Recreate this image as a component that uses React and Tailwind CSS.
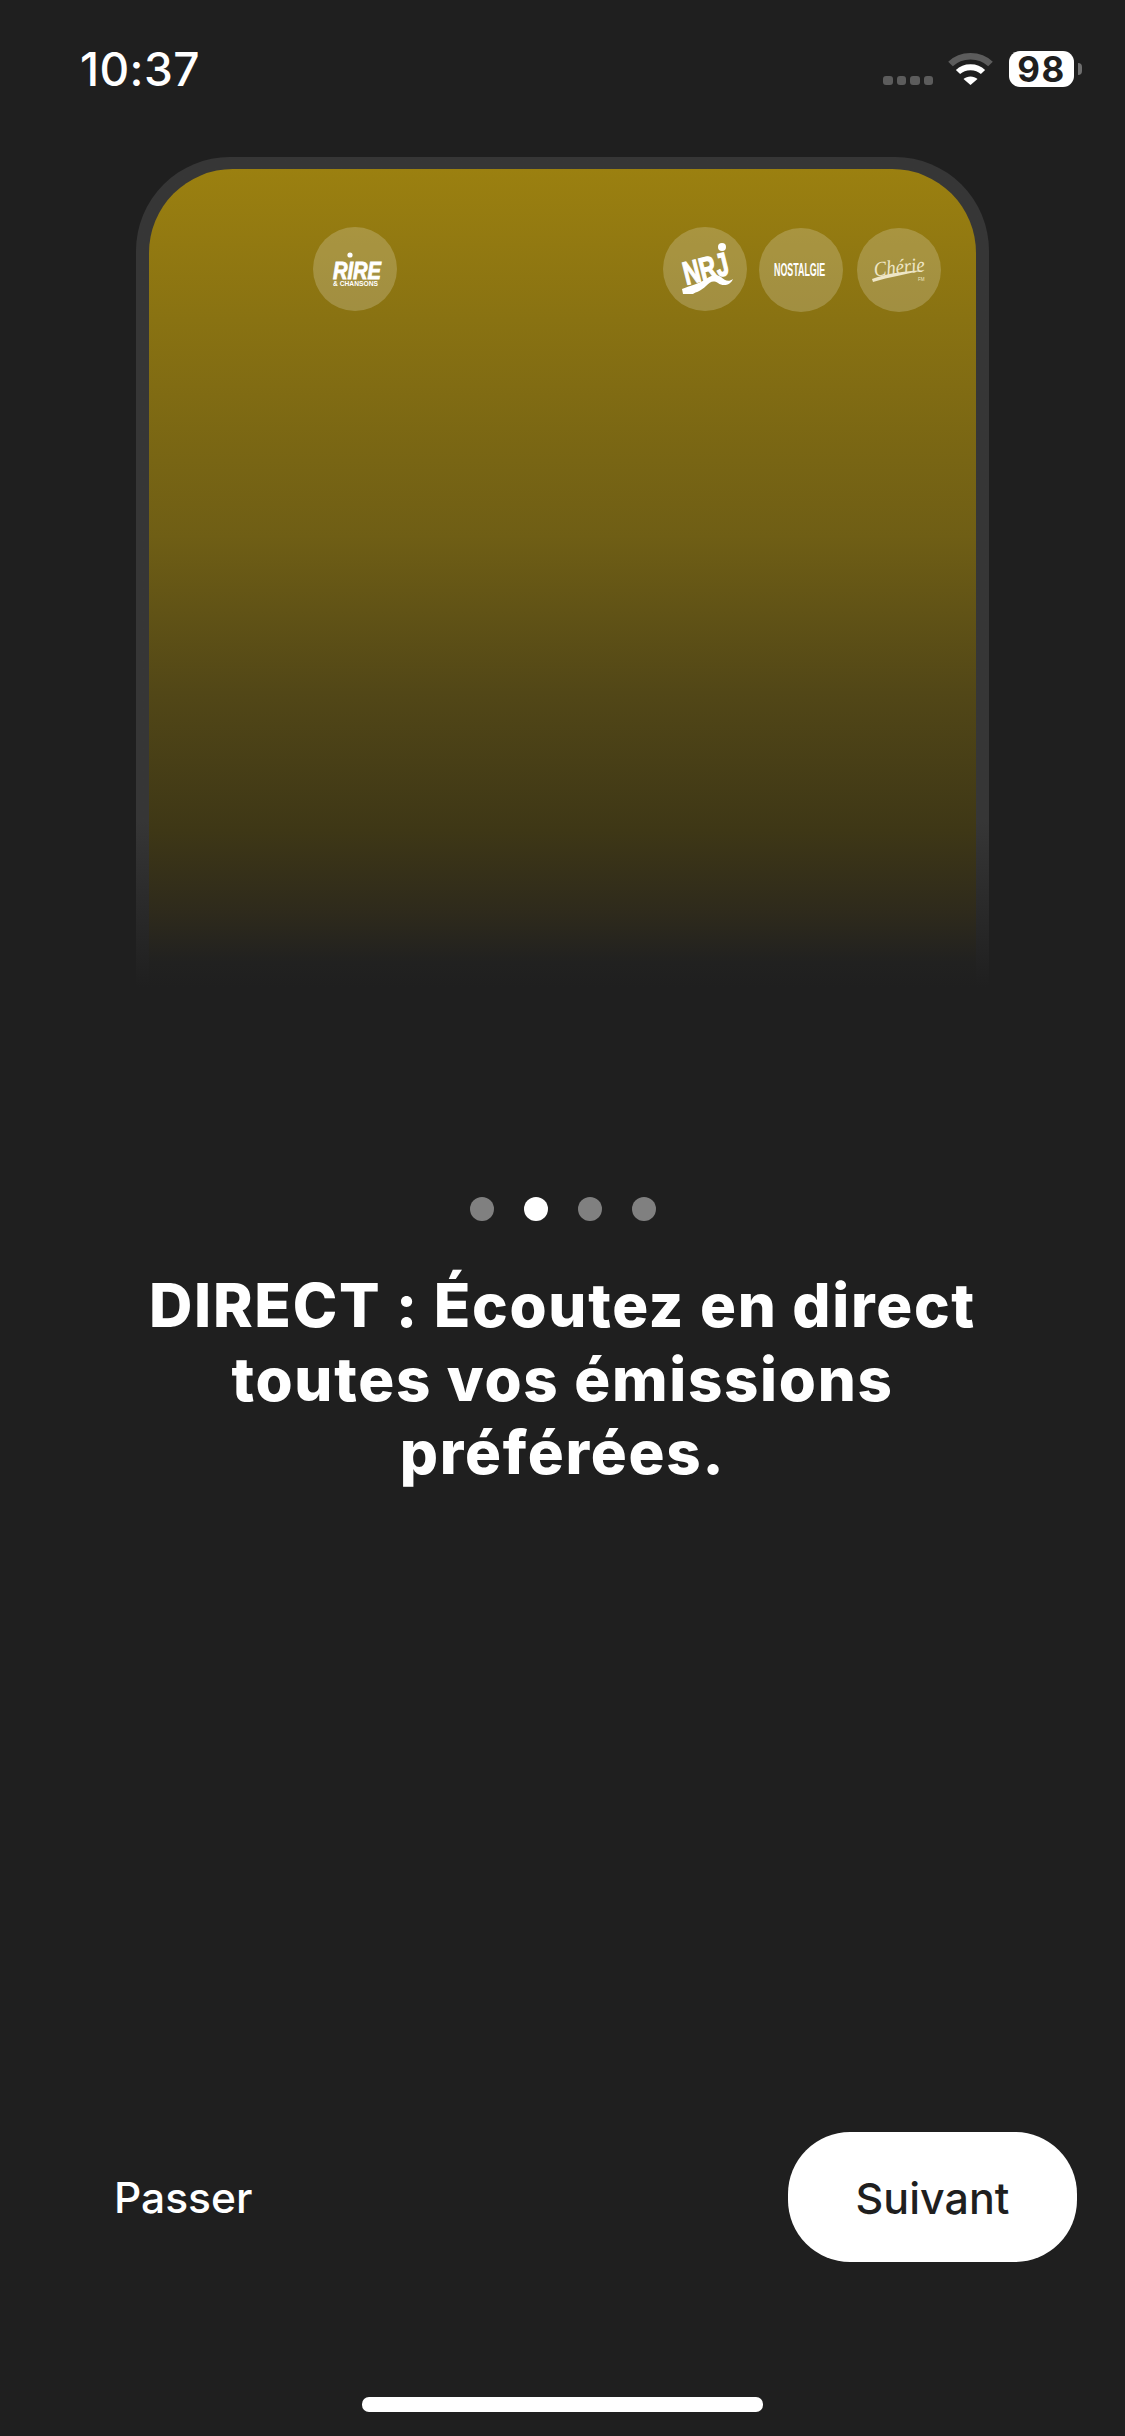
const StationCircle = ({ className = '', children }) => (
  <div className={`w-[84px] h-[84px] shrink-0 rounded-full bg-white/20 ${className}`}>
    <svg viewBox="0 0 84 84" className="w-full h-full">
      {children}
    </svg>
  </div>
);

const logoFont = { fontFamily: '"Liberation Sans", Arial, sans-serif' };

const RireLogo = () => (
  <StationCircle>
    <circle cx="37" cy="28" r="2.6" fill="#fff" />
    <text
      x="20" y="52" textLength="48" lengthAdjust="spacingAndGlyphs"
      fontSize="24" fontWeight="700" fontStyle="italic" fill="#fff" stroke="#fff" strokeWidth="0.9"
      style={logoFont}
    >
      RIRE
    </text>
    <text
      x="20" y="58.5" textLength="45" lengthAdjust="spacingAndGlyphs"
      fontSize="6.5" fontWeight="700" fill="#fff" style={logoFont}
    >
      &amp; CHANSONS
    </text>
  </StationCircle>
);

const NrjLogo = () => (
  <StationCircle>
    <circle cx="59" cy="20" r="4" fill="#fff" />
    <text
      transform="rotate(-14 42 42) translate(20 53) scale(0.88 1.25)"
      fontSize="26" fontWeight="700" fill="#fff" stroke="#fff" strokeWidth="1"
      style={logoFont}
    >
      NRJ
    </text>
    <path
      d="M19 62 C28 58 36 57 43 52 C48 48 54 47 58 50 C62 54 66 55 70 52 C68 58 60 60 55 56 C50 53 47 55 43 59 C38 64 33 65 30 67 L20 67 Z"
      fill="#fff"
    />
  </StationCircle>
);

const NostalgieLogo = () => (
  <StationCircle className="ml-3 mt-px">
    <text
      transform="translate(15 48) scale(0.74 1.5)"
      fontSize="12" fontWeight="700" fill="#fff" style={logoFont}
    >
      NOSTALGIE
    </text>
  </StationCircle>
);

const CherieLogo = () => (
  <StationCircle className="ml-[14px] mt-px">
    <text
      x="17" y="46" textLength="51" lengthAdjust="spacingAndGlyphs"
      fontSize="21" fontStyle="italic" fill="#eee6c6" transform="rotate(-6 42 42)"
      style={{ fontFamily: '"Liberation Serif", serif' }}
    >
      Chérie
    </text>
    <path d="M15 51 C30 45 50 43 68 42 C50 46 32 49 16 54 Z" fill="#eee6c6" />
    <text x="61" y="53" fontSize="4.5" fill="#eee6c6" style={logoFont}>FM</text>
  </StationCircle>
);

const WifiIcon = () => (
  <svg viewBox="0 0 45 33" className="w-[45px] h-[33px] mt-px ml-[15px]">
    <path d="M2.5 12 C13 1.5 32 1.5 42.5 12" fill="none" stroke="#5c5c5c" strokeWidth="6.5" />
    <path d="M10 20 C16.5 13.5 28.5 13.5 35 20" fill="none" stroke="#fff" strokeWidth="6" />
    <path d="M15.5 27 C19 23.6 26 23.6 29.5 27 L22.5 33 Z" fill="#fff" />
  </svg>
);

export default function App() {
  return (
    <div className="w-[1125px] h-[2436px] bg-[#1f1f1f] text-white flex flex-col overflow-hidden font-['Inter',sans-serif]">
      {/* Status bar */}
      <div className="h-[157px] shrink-0 pt-[51px] pl-[80px] pr-[43px] flex items-start justify-between">
        <span className="text-[46px] leading-[36px] font-medium tracking-[0.4px]">10:37</span>
        <div className="flex items-start">
          <div className="flex gap-1 mt-[25px]">
            <div className="w-[9.5px] h-[9px] rounded-[3px] bg-[#5c5c5c]" />
            <div className="w-[9.5px] h-[9px] rounded-[3px] bg-[#5c5c5c]" />
            <div className="w-[9.5px] h-[9px] rounded-[3px] bg-[#5c5c5c]" />
            <div className="w-[9.5px] h-[9px] rounded-[3px] bg-[#5c5c5c]" />
          </div>
          <WifiIcon />
          <div className="w-[65px] h-9 ml-4 rounded-[11px] bg-white text-[#1f1f1f] text-[35px] font-bold leading-9 tracking-[1.5px] text-center">
            98
          </div>
          <div className="w-1 h-3 ml-1 mt-3 rounded-r-full bg-[#6e6e6e]" />
        </div>
      </div>

      {/* Phone preview */}
      <div className="w-[853px] h-[830px] shrink-0 mx-auto pt-3 px-[13px] rounded-t-[94px] bg-gradient-to-b from-[#363636] via-[#363636] via-80% to-[#1f1f1f]">
        <div className="h-full rounded-t-[84px] bg-[linear-gradient(to_bottom,#9b8010_0%,#6f5e15_45%,#524717_64%,#3e3716_81%,#2e2a1c_91%,#212120_97%,#1f1f1f_100%)]">
          <div className="flex items-start pt-[58px] pl-[164px] pr-[35px]">
            <RireLogo />
            <div className="flex items-start ml-auto">
              <NrjLogo />
              <NostalgieLogo />
              <CherieLogo />
            </div>
          </div>
        </div>
      </div>

      {/* Pager */}
      <div className="flex justify-center gap-[30px] mt-[210px]">
        <div className="w-6 h-6 rounded-full bg-[#808080]" />
        <div className="w-6 h-6 rounded-full bg-white" />
        <div className="w-6 h-6 rounded-full bg-[#808080]" />
        <div className="w-6 h-6 rounded-full bg-[#808080]" />
      </div>

      <h1 className="mt-12 text-center text-[60px] leading-[73.5px] font-extrabold tracking-[1.7px]">
        DIRECT : Écoutez en direct
        <br />
        toutes vos émissions
        <br />
        préférées.
      </h1>

      {/* Actions */}
      <div className="mt-auto flex items-center justify-between pl-[114px] pr-12">
        <button className="pt-0.5 text-[42.5px] font-medium text-white">Passer</button>
        <button className="w-[289px] h-[130px] pt-0.5 rounded-[62px] bg-white text-[#1f1f1f] text-[43px] font-medium">
          Suivant
        </button>
      </div>

      <div className="w-[401px] h-[15px] mx-auto mt-[135px] mb-6 rounded-[7px] bg-white" />
    </div>
  );
}
